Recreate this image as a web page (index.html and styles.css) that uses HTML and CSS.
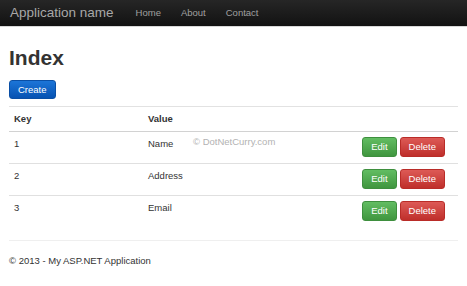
FILE: index.html
```html
<!DOCTYPE html>
<html>
<head>
<meta charset="utf-8">
<title>Index</title>
<link rel="stylesheet" href="styles.css">
</head>
<body>
<header class="navbar">
  <a class="brand" href="#">Application name</a>
  <nav class="nav">
    <a href="#">Home</a>
    <a href="#">About</a>
    <a href="#">Contact</a>
  </nav>
</header>
<main class="container">
  <h1 class="title">Index</h1>
  <p class="create-row"><a class="btn btn-primary" href="#">Create</a></p>
  <table class="table">
    <thead>
      <tr><th class="col-key">Key</th><th>Value</th><th class="col-actions"></th></tr>
    </thead>
    <tbody>
      <tr>
        <td>1</td>
        <td class="value-cell">Name<span class="watermark">© DotNetCurry.com</span></td>
        <td class="col-actions"><a class="btn btn-success" href="#">Edit</a><a class="btn btn-danger" href="#">Delete</a></td>
      </tr>
      <tr>
        <td>2</td>
        <td>Address</td>
        <td class="col-actions"><a class="btn btn-success" href="#">Edit</a><a class="btn btn-danger" href="#">Delete</a></td>
      </tr>
      <tr>
        <td>3</td>
        <td>Email</td>
        <td class="col-actions"><a class="btn btn-success" href="#">Edit</a><a class="btn btn-danger" href="#">Delete</a></td>
      </tr>
    </tbody>
  </table>
  <hr class="rule">
  <footer class="footer">© 2013 - My ASP.NET Application</footer>
</main>
</body>
</html>
```
FILE: styles.css
```css
html, body {
  margin: 0;
  padding: 0;
  background: #fff;
}
body {
  font-family: "Liberation Sans", Arial, sans-serif;
  font-size: 9.5px;
  line-height: 13px;
  color: #333;
}
a { text-decoration: none; }

.navbar {
  display: flex;
  align-items: center;
  height: 26px;
  padding-left: 10px;
  background: linear-gradient(#262626, #121212);
  border-bottom: 1px solid #d8d8d8;
}
.brand {
  font-size: 13.5px;
  color: #a8a8a8;
  margin-right: 12px;
  line-height: 26px;
}
.nav {
  display: flex;
}
.nav a {
  color: #a0a0a0;
  padding: 0 10px;
  font-size: 9.5px;
  line-height: 26px;
}

.container {
  padding: 0 9px;
}
.title {
  margin: 19px 0 11px;
  font-size: 21px;
  line-height: 23px;
  font-weight: bold;
  color: #333;
}
.create-row {
  margin: 0 0 7px;
  line-height: 19px;
  height: 19px;
}
.btn {
  display: inline-block;
  height: 20px;
  line-height: 18px;
  padding: 0 8px;
  border: 1px solid transparent;
  border-radius: 3px;
  color: #fff;
  font-size: 9.5px;
  box-sizing: border-box;
  vertical-align: top;
}
.btn-primary {
  height: 19px;
  line-height: 17px;
  background: linear-gradient(#1c75d8, #0652b2);
  border-color: #0a4fa5;
}
.btn-success {
  background: linear-gradient(#62bd62, #40963f);
  border-color: #3e8f3e;
}
.btn-danger {
  background: linear-gradient(#dd5a56, #bf2f2b);
  border-color: #b92c28;
  margin-left: 3px;
}

.table {
  width: 100%;
  border-spacing: 0;
  border-collapse: separate;
  border-top: 1px solid #e2e2e2;
}
.table th {
  text-align: left;
  font-weight: bold;
  padding: 5px 5px 6px;
  border-bottom: 1px solid #d2d2d2;
}
.table td {
  padding: 5px 5px 6px;
  border-top: 1px solid #e0e0e0;
  vertical-align: top;
}
.table tbody tr:first-child td {
  border-top: none;
}
.col-key {
  width: 124px;
}
.col-actions {
  width: 1%;
  white-space: nowrap;
  text-align: right;
}
.table td.col-actions {
  padding-right: 13px;
}
.value-cell {
  position: relative;
}
.watermark {
  position: absolute;
  left: 50px;
  top: 3px;
  color: #b2b2b2;
  white-space: nowrap;
}

.rule {
  margin: 13px 0 0;
  border: 0;
  border-top: 1px solid #efefef;
  height: 0;
}
.footer {
  padding-top: 13px;
}
```
